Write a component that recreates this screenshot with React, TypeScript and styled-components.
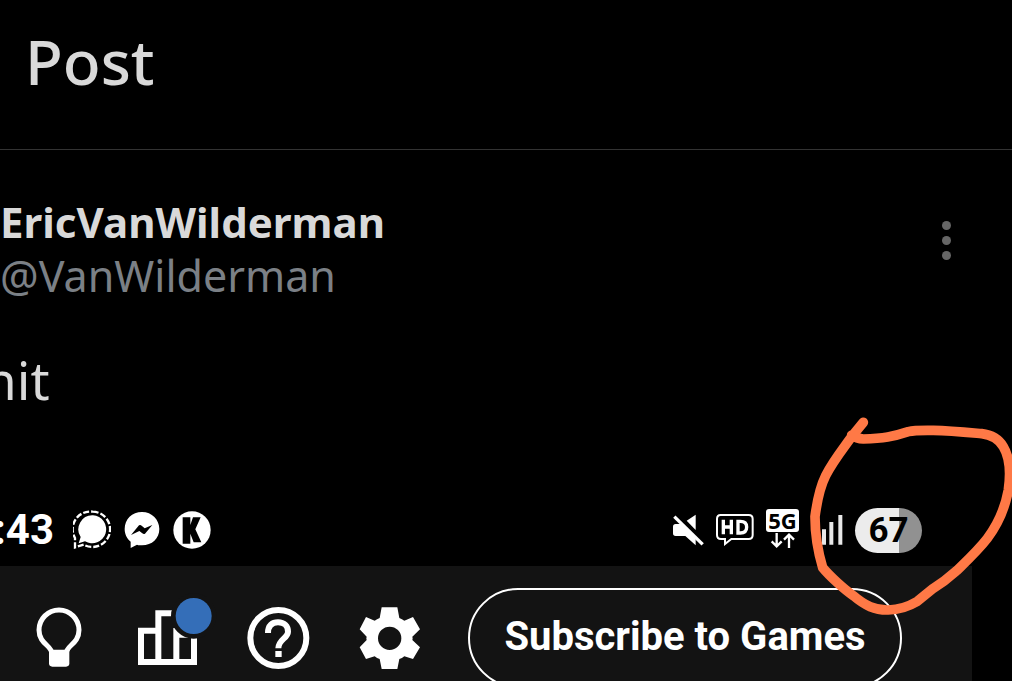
import React from "react";
import styled, { createGlobalStyle } from "styled-components";

const GlobalStyle = createGlobalStyle`
  * { box-sizing: border-box; }
  html, body { margin: 0; background: #000; }
  h1, h2, p { margin: 0; }
`;

const Page = styled.main`
  height: 100vh;
  overflow: hidden;
  background: #000;
  color: #d9d9d9;
  font-family: "Noto Sans", sans-serif;
`;

const Header = styled.header`
  padding: 21px 25px 48px;
  border-bottom: 1px solid #333;
`;

const Title = styled.h1`
  font-size: 62px;
  line-height: 80px;
  font-weight: 500;
`;

const Author = styled.section`
  display: flex;
  justify-content: space-between;
  padding: 45px 61px 0 0;
`;

const DisplayName = styled.h2`
  font-size: 42px;
  line-height: 54px;
  font-weight: 700;
`;

const Handle = styled.a`
  display: block;
  color: #7b8086;
  font-size: 43px;
  line-height: 54px;
  text-decoration: none;
`;

const MoreButton = styled.button`
  display: flex;
  flex-direction: column;
  align-items: center;
  align-self: flex-start;
  gap: 6px;
  margin-top: 26px;
  padding: 0;
  border: 0;
  background: none;
`;

const Dot = styled.span`
  width: 9px;
  height: 9px;
  border-radius: 50%;
  background: #666;
`;

const Message = styled.p`
  margin: 43px 0 80px -16px;
  font-size: 53px;
  line-height: 68px;
`;

const Photo = styled.section`
  position: relative;
  font-family: Roboto, sans-serif;
`;

const StatusBar = styled.div`
  display: flex;
  align-items: center;
  justify-content: space-between;
  height: 72px;
  padding-right: 90px;
  color: #fff;
`;

const StatusGroup = styled.div<{ $gap: number }>`
  display: flex;
  align-items: center;
  gap: ${(p) => p.$gap}px;
`;

const Clock = styled.time`
  margin: 0 6px 0 -6px;
  font-size: 42px;
  line-height: 48px;
  font-weight: 700;
`;

const Battery = styled.span`
  width: 67px;
  border-radius: 23px;
  background: linear-gradient(90deg, #ececec 66%, #919191 66%);
  color: #000;
  font-size: 35px;
  line-height: 45px;
  font-weight: 700;
  text-align: center;
`;

const Toolbar = styled.div`
  display: flex;
  align-items: center;
  gap: 48px;
  margin-right: 40px;
  padding: 22px 70px 22px 28px;
  background: #131313;
`;

const IconButton = styled.button`
  flex: none;
  width: 62px;
  height: 80px;
  padding: 0;
  border: 0;
  background: none;
  svg { display: block; overflow: visible; }
`;

const Subscribe = styled.button`
  flex: 1;
  height: 100px;
  padding: 0 0 3px;
  border: 2px solid #fff;
  border-radius: 50px;
  background: none;
  color: #fff;
  font-family: Roboto, sans-serif;
  font-size: 40px;
  font-weight: 700;
  white-space: nowrap;
`;

const Scribble = styled.svg`
  position: absolute;
  top: -84px;
  right: 0;
  pointer-events: none;
`;

const SignalIcon = () => (
  <svg width="38" height="40" viewBox="0 0 114 120" fill="none">
    <path d="M60 16A42 42 0 1 1 36 94L17 100L23 81A42 42 0 0 1 60 16Z" fill="#fff" />
    <path d="M59 5A53 53 0 1 1 32 104L6 112V84A53 53 0 0 1 59 5Z" stroke="#fff" strokeWidth="7" strokeDasharray="18 6" />
  </svg>
);

const MessengerIcon = () => (
  <svg width="36" height="38" viewBox="0 0 108 114">
    <path d="M54 3C24 3 2 25 2 54c0 16 7 29 18 38v19l19-10c5 2 10 2 15 2 30 0 52-21 52-49S84 3 54 3Z" fill="#fff" />
    <path d="M21 72L45 43Q49 40 53 44L62 52L85 42L63 68Q59 71 55 67L46 60Z" fill="#000" />
  </svg>
);

const KickIcon = () => (
  <svg width="38" height="38" viewBox="0 0 114 114">
    <circle cx="57" cy="57" r="56" fill="#fff" />
    <path d="M29 19H52V42L60 19H83L67 55L85 94H62L52 68V98H29Z" fill="#000" />
  </svg>
);

const MuteIcon = () => (
  <svg width="32" height="32" viewBox="0 0 96 96">
    <path d="M3 38Q3 30 11 30H28L71 74V94L40 66H11Q3 66 3 58Z" fill="#fff" />
    <path d="M44 20L71 2V48Z" fill="#fff" />
    <path d="M7 8L92 91" stroke="#fff" strokeWidth="10" />
  </svg>
);

const HdIcon = () => (
  <svg width="38" height="32" viewBox="0 0 114 96" fill="none" stroke="#fff">
    <path d="M14 3H98Q110 3 110 15V63Q110 75 98 75H46L27 90V75H15Q3 75 3 63V15Q3 3 14 3Z" strokeWidth="6" />
    <path d="M22 17V61M46 17V61M22 39H46M66 22H73Q92 22 92 39Q92 57 73 57H66Z" strokeWidth="10" />
  </svg>
);

const FiveGBadge = styled.span`
  display: block;
  width: 33px;
  border-radius: 3px;
  background: #fff;
  color: #000;
  font: 700 22px/23px "Noto Sans", sans-serif;
  text-align: center;
`;

const FiveG = styled.span`
  display: flex;
  flex-direction: column;
  align-items: center;
  gap: 1px;
  margin-bottom: 4px;
`;

const BarsIcon = () => (
  <svg width="32" height="32" viewBox="-25 0 96 96">
    <path d="M8 46H20V92H8ZM30 24H42V92H30ZM57 3H69V92H57Z" fill="#e8e8e8" />
  </svg>
);

export default function App() {
  return (
    <Page>
      <GlobalStyle />
      <Header>
        <Title>Post</Title>
      </Header>
      <Author>
        <div>
          <DisplayName>EricVanWilderman</DisplayName>
          <Handle href="#profile">@VanWilderman</Handle>
        </div>
        <MoreButton aria-label="More options">
          <Dot />
          <Dot />
          <Dot />
        </MoreButton>
      </Author>
      <Message>nit</Message>
      <Photo>
        <StatusBar>
          <StatusGroup $gap={13}>
            <Clock>:43</Clock>
            <SignalIcon />
            <MessengerIcon />
            <KickIcon />
          </StatusGroup>
          <StatusGroup $gap={12}>
            <MuteIcon />
            <HdIcon />
            <FiveG>
              <FiveGBadge>5G</FiveGBadge>
              <svg width="26" height="15" viewBox="0 0 78 45" fill="none" stroke="#fff" strokeWidth="7">
                <path d="M20 0V40M5 25L20 40L35 25M57 45V5M42 20L57 5L72 20" />
              </svg>
            </FiveG>
            <BarsIcon />
            <Battery>67</Battery>
          </StatusGroup>
        </StatusBar>
        <Toolbar>
          <IconButton aria-label="Hint">
            <svg width="62" height="80" viewBox="0 0 186 240">
              <path d="M71 165C71 143 33 137 33 96A60 60 0 0 1 153 96C153 137 115 143 115 165" fill="none" stroke="#fff" strokeWidth="15" />
              <path d="M63 155H124V196Q124 206 114 206H73Q63 206 63 196Z" fill="#fff" />
            </svg>
          </IconButton>
          <IconButton aria-label="Statistics">
            <svg width="62" height="80" viewBox="0 0 186 240">
              <path d="M9 193V98H61V193M61 193V46H102M61 46V193M115 90V193M115 110H168V193M0 192H177" fill="none" stroke="#fff" strokeWidth="18" />
              <circle cx="167" cy="54" r="68" fill="#131313" />
              <circle cx="167" cy="54" r="54" fill="#346eb8" />
            </svg>
          </IconButton>
          <IconButton aria-label="Help">
            <svg width="62" height="80" viewBox="0 0 186 240">
              <circle cx="91" cy="120" r="84" fill="none" stroke="#fff" strokeWidth="18" />
              <path d="M60 105C60 82 73 73 90 73C109 73 120 85 120 101C120 121 91 124 91 151" fill="none" stroke="#fff" strokeWidth="18" />
              <path d="M82 159H101V177H82Z" fill="#fff" />
            </svg>
          </IconButton>
          <IconButton aria-label="Settings">
            <svg width="62" height="80" viewBox="0 0 186 240">
              <path fillRule="evenodd" d="M71 28H118L124 60Q132 63 139 68L165 57L186 94L163 116Q165 121 163 126L186 148L165 183L139 175Q132 181 124 183L118 213H71L65 183Q57 181 50 175L24 183L5 148L26 126Q24 121 26 116L5 94L24 57L50 68Q57 63 65 60ZM95 86A35 35 0 1 0 95 156A35 35 0 1 0 95 86Z" fill="#fff" />
            </svg>
          </IconButton>
          <Subscribe>Subscribe to Games</Subscribe>
        </Toolbar>
        <Scribble width="212" height="215" viewBox="0 0 636 645" fill="none" aria-hidden="true">
          <path
            d="M190 37L155 80C125 122 98 155 77 197C57 237 50 282 45 320C45 375 54 425 68 473C90 500 135 540 160 557C195 587 225 601 265 600C300 599 330 587 352 574L400 535C435 514 450 500 470 482C505 448 535 420 562 385C592 345 615 295 625 240C632 190 628 140 610 110C596 87 572 74 545 71C490 66 450 62 400 61C370 61 345 60 325 65C280 80 250 85 190 87Q170 86 155 75"
            stroke="#ff7946"
            strokeWidth="29"
            strokeLinecap="round"
            strokeLinejoin="round"
          />
        </Scribble>
      </Photo>
    </Page>
  );
}
